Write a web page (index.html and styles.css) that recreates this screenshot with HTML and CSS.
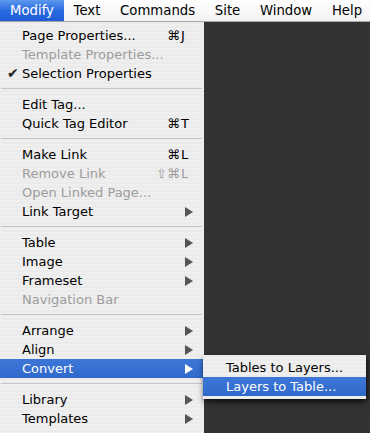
FILE: index.html
```html
<!DOCTYPE html>
<html>
<head>
<meta charset="utf-8">
<link rel="stylesheet" href="styles.css">
</head>
<body>
<div class="menubar">
  <span class="mb-item active">Modify</span>
  <span class="mb-item">Text</span>
  <span class="mb-item">Commands</span>
  <span class="mb-item">Site</span>
  <span class="mb-item">Window</span>
  <span class="mb-item">Help</span>
</div>
<div class="stage">
  <div class="menu">
    <div class="item"><span class="chk"></span><span class="lbl">Page Properties...</span><span class="mods">⌘</span><span class="key">J</span></div>
    <div class="item dis"><span class="chk"></span><span class="lbl">Template Properties...</span><span class="mods"></span><span class="key"></span></div>
    <div class="item"><span class="chk">✔</span><span class="lbl">Selection Properties</span><span class="mods"></span><span class="key"></span></div>
    <div class="sep"></div>
    <div class="item"><span class="chk"></span><span class="lbl">Edit Tag...</span><span class="mods"></span><span class="key"></span></div>
    <div class="item"><span class="chk"></span><span class="lbl">Quick Tag Editor</span><span class="mods">⌘</span><span class="key">T</span></div>
    <div class="sep"></div>
    <div class="item"><span class="chk"></span><span class="lbl">Make Link</span><span class="mods">⌘</span><span class="key">L</span></div>
    <div class="item dis"><span class="chk"></span><span class="lbl">Remove Link</span><span class="mods">⇧⌘</span><span class="key">L</span></div>
    <div class="item dis"><span class="chk"></span><span class="lbl">Open Linked Page...</span><span class="mods"></span><span class="key"></span></div>
    <div class="item"><span class="chk"></span><span class="lbl">Link Target</span><span class="mods"></span><span class="key"><i class="arrow"></i></span></div>
    <div class="sep"></div>
    <div class="item"><span class="chk"></span><span class="lbl">Table</span><span class="mods"></span><span class="key"><i class="arrow"></i></span></div>
    <div class="item"><span class="chk"></span><span class="lbl">Image</span><span class="mods"></span><span class="key"><i class="arrow"></i></span></div>
    <div class="item"><span class="chk"></span><span class="lbl">Frameset</span><span class="mods"></span><span class="key"><i class="arrow"></i></span></div>
    <div class="item dis"><span class="chk"></span><span class="lbl">Navigation Bar</span><span class="mods"></span><span class="key"></span></div>
    <div class="sep"></div>
    <div class="item"><span class="chk"></span><span class="lbl">Arrange</span><span class="mods"></span><span class="key"><i class="arrow"></i></span></div>
    <div class="item"><span class="chk"></span><span class="lbl">Align</span><span class="mods"></span><span class="key"><i class="arrow"></i></span></div>
    <div class="item sel"><span class="chk"></span><span class="lbl">Convert</span><span class="mods"></span><span class="key"><i class="arrow"></i></span></div>
    <div class="sep"></div>
    <div class="item"><span class="chk"></span><span class="lbl">Library</span><span class="mods"></span><span class="key"><i class="arrow"></i></span></div>
    <div class="item"><span class="chk"></span><span class="lbl">Templates</span><span class="mods"></span><span class="key"><i class="arrow"></i></span></div>
  </div>
  <div class="desk"></div>
  <div class="submenu">
    <div class="sitem">Tables to Layers...</div>
    <div class="sitem sel">Layers to Table...</div>
  </div>
</div>
</body>
</html>
```
FILE: styles.css
```css
html, body {
  margin: 0;
  padding: 0;
  background: #333333;
}
body {
  width: 370px;
  height: 433px;
  overflow: hidden;
  font-family: "DejaVu Sans", "Liberation Sans", sans-serif;
  font-size: 13px;
  color: #000;
}
.menubar {
  display: flex;
  height: 21px;
  line-height: 21px;
  font-size: 13.25px;
  background: linear-gradient(#ffffff, #f2f2f2);
  border-bottom: 1px solid #a8a8a8;
}
.mb-item {
  padding: 0 9.7px 0 10px;
  white-space: nowrap;
}
.mb-item.active {
  color: #fff;
  background: linear-gradient(#5b98ee, #2a6ae0 50%, #1d5cd6);
}
.stage {
  position: relative;
  display: flex;
  height: 411px;
}
.menu {
  width: 204px;
  padding-top: 4px;
  background: repeating-linear-gradient(#ebebeb 0, #ebebeb 2px, #efefef 2px, #efefef 4px);
  box-sizing: border-box;
}
.desk {
  flex: 1;
  background: #333333;
}
.item {
  display: grid;
  grid-template-columns: 22px 1fr auto 24px;
  height: 19px;
  line-height: 19px;
  white-space: nowrap;
}
.item.dis {
  color: #9c9c9c;
}
.item.sel {
  color: #fff;
  background: linear-gradient(#3d77d6, #2f69cc);
}
.chk {
  padding-left: 7px;
  font-size: 14px;
  color: #222;
}
.mods {
  text-align: right;
}
.key {
  padding-left: 1px;
  position: relative;
}
.arrow {
  position: absolute;
  left: 5px;
  top: 5px;
  width: 0;
  height: 0;
  border-top: 5px solid transparent;
  border-bottom: 5px solid transparent;
  border-left: 8px solid #555;
}
.item.sel .arrow {
  border-left-color: #fff;
}
.sep {
  height: 12px;
  position: relative;
}
.sep::after {
  content: "";
  position: absolute;
  left: 1px;
  right: 2px;
  top: 5px;
  height: 1px;
  background: #c6c6c6;
}
.submenu {
  position: absolute;
  left: 203px;
  top: 333px;
  width: 163px;
  padding: 3px 0;
  background: repeating-linear-gradient(#ebebeb 0, #ebebeb 2px, #efefef 2px, #efefef 4px);
  box-shadow: 1px 3px 6px rgba(0, 0, 0, 0.75);
}
.sitem {
  height: 19px;
  line-height: 19px;
  padding-left: 23px;
  white-space: nowrap;
}
.sitem.sel {
  color: #fff;
  background: linear-gradient(#3d77d6, #2f69cc);
}
```
